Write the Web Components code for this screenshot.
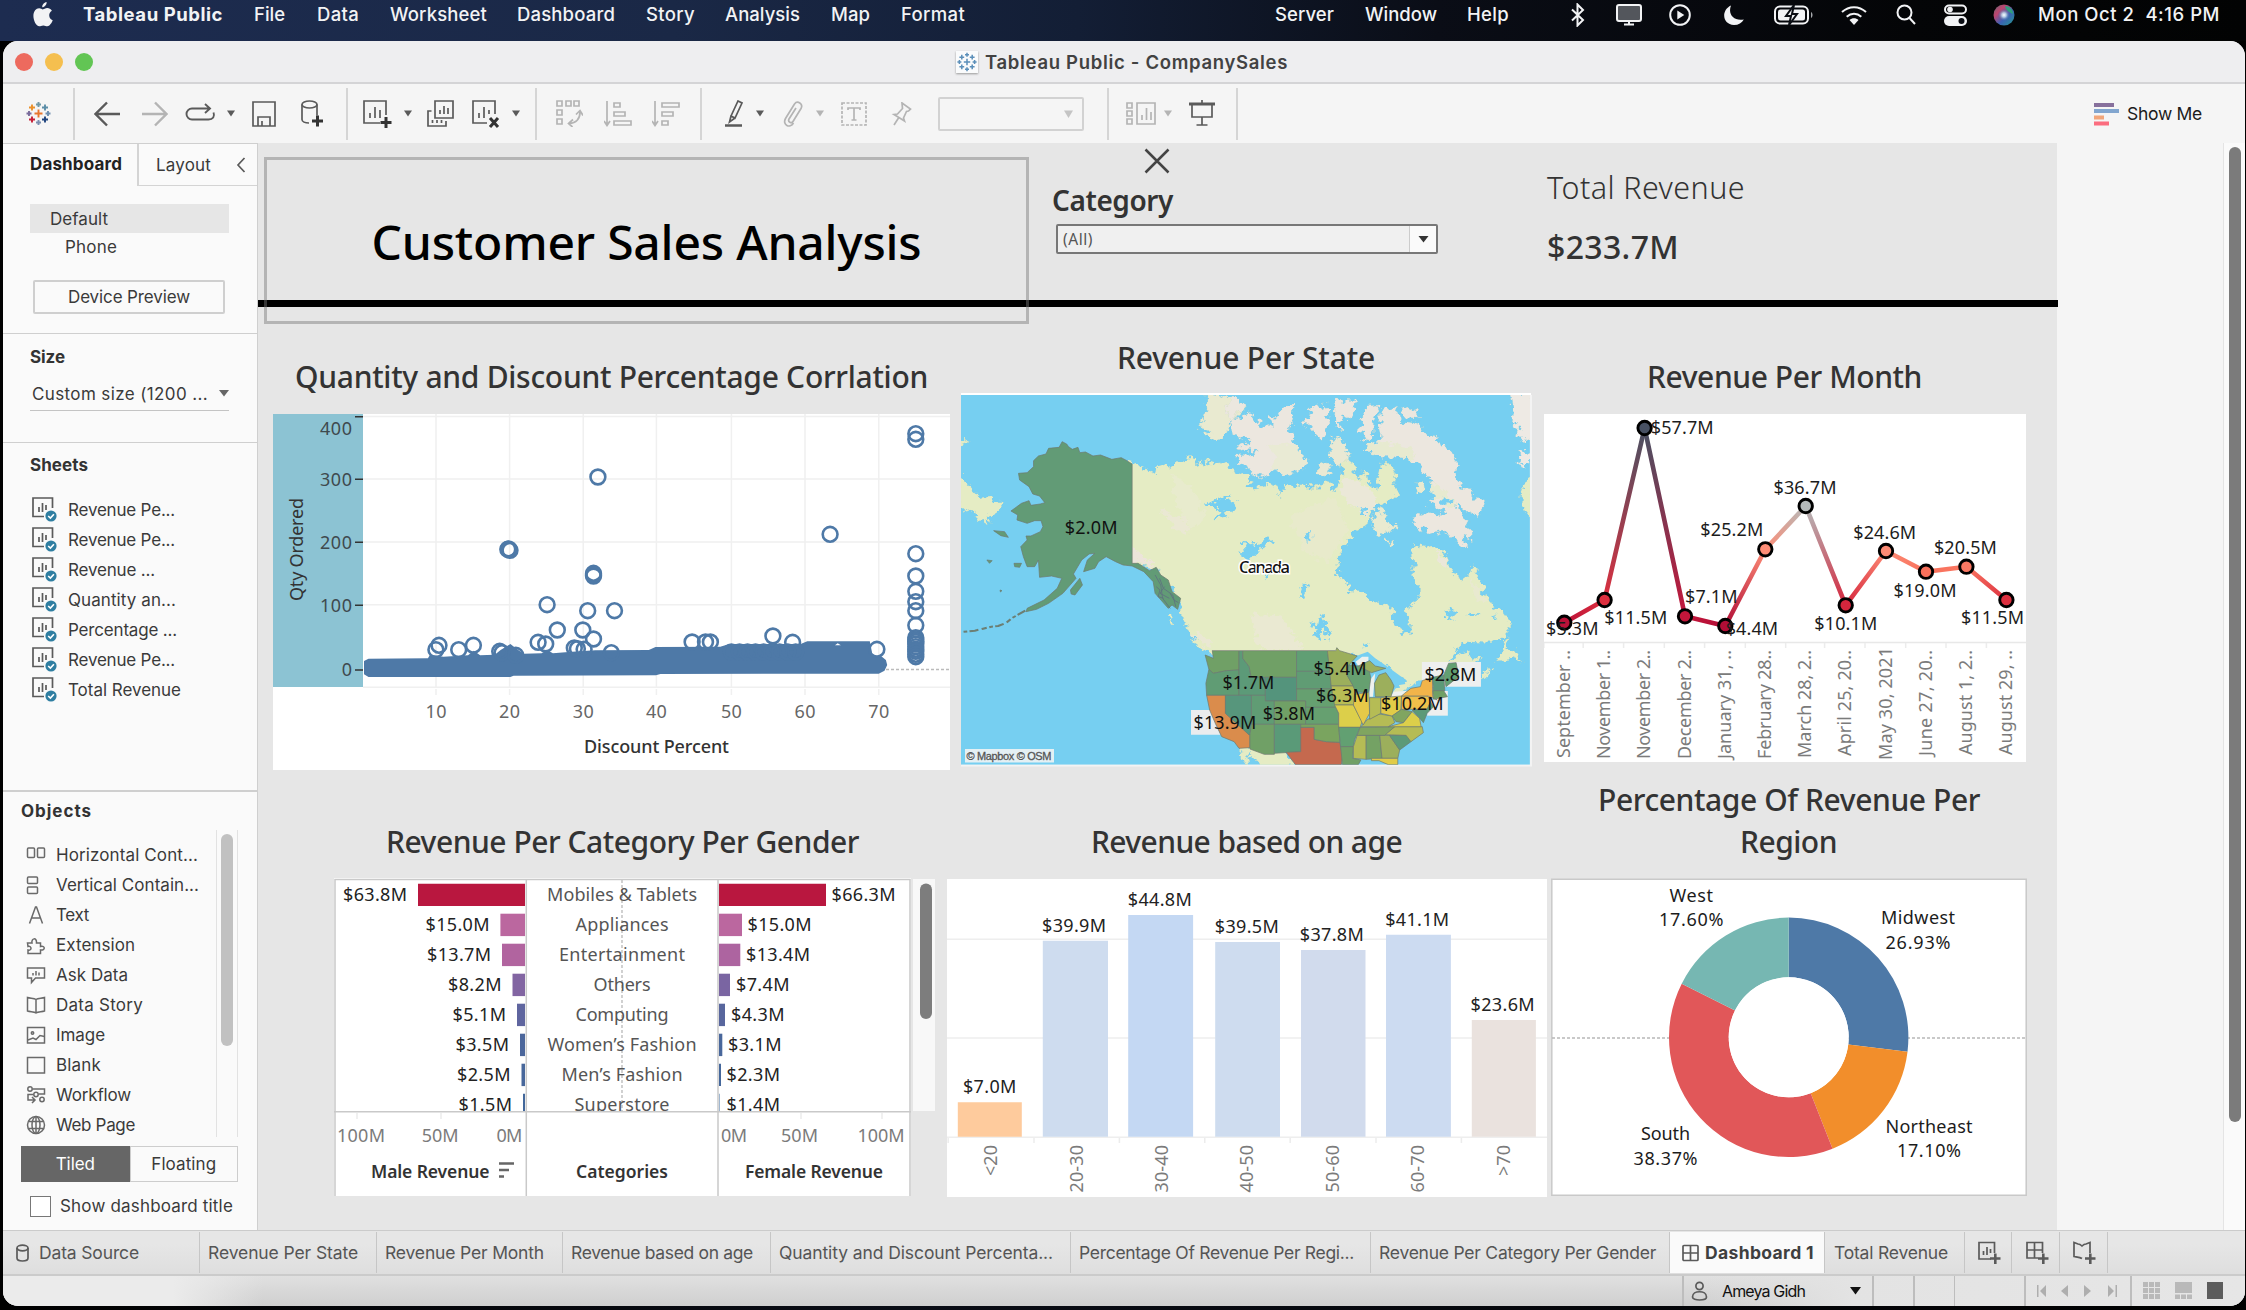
<!DOCTYPE html>
<html lang="en">
<head>
<meta charset="utf-8">
<title>Tableau Public - CompanySales</title>
<style>
html,body{margin:0;padding:0;width:2246px;height:1310px;overflow:hidden;background:#000}
body{font-family:Inter,"Liberation Sans",sans-serif}
</style>
</head>
<body>
<desktop-screen></desktop-screen>
<script>
const UI = 'Inter,"Liberation Sans",sans-serif';
const BOOK = '"Noto Sans","Open Sans",sans-serif';

function define(name, css, render) {
  customElements.define(name, class extends HTMLElement {
    connectedCallback() {
      if (this.shadowRoot) return;
      this.attachShadow({mode: 'open'}).innerHTML =
        `<style>*{box-sizing:border-box}${css}</style>${render(this)}`;
    }
  });
}

/* Text whose tracking is tuned to a given advance width. */
customElements.define('fit-text', class extends HTMLElement {
  connectedCallback() {
    if (this.shadowRoot) return;
    this.attachShadow({mode: 'open'}).innerHTML =
      '<style>:host{display:inline-block;white-space:pre;flex:none;align-self:flex-start}:host([mid]){align-self:center}</style><slot></slot>';
    const w = +this.getAttribute('w'), n = this.textContent.length;
    const natural = this.getBoundingClientRect().width;
    if (w && natural) {
      this.style.letterSpacing = ((w - natural) / n) + 'px';
      this.style.width = w + 'px';
    }
  }
});
const esc = s => s.replace(/&/g, '&amp;').replace(/</g, '&lt;');
const T = (s, w, style = '', mid = 'mid') => `<fit-text ${mid} w="${w}" style="${style}">${esc(s)}</fit-text>`;
const svg = (w, h, body, a = '') =>
  `<svg width="${w}" height="${h}" viewBox="0 0 ${w} ${h}" fill="none" stroke="#5a5a5a" stroke-width="1.7" ${a}>${body}</svg>`;

/* Lays items [start, width, html] along a row, turning starts into gaps. */
function flow(items, origin) {
  let end = origin;
  return items.map(([x, w, h]) => {
    const m = x - end; end = x + w;
    return `<span style="display:flex;flex:none;align-items:center;width:${w}px;margin-left:${m}px">${h}</span>`;
  }).join('');
}

/* ---------- macOS menu bar ---------- */
define('mac-menu-bar', `
:host{display:flex;height:41px;align-items:flex-start;background:linear-gradient(90deg,#1d2c50 0,#1a2846 30%,#131e35 48%,#0a0d16 64%,#040507 85%,#020303);color:#f2f3f5;font-size:18.5px;line-height:29px;font-weight:500;overflow:hidden}
.r{display:flex;height:29px;align-items:center}
`, () => {
  const W = 'stroke="#f2f3f5" stroke-width="2"';
  return `<div class="r">${flow([
    [33, 20, `<svg width="20" height="25" viewBox="0 0 20 25" fill="#f2f3f5"><path d="M13.6 0c.3 2.600-2 5.300-4.300 5.300C8.900 2.900 11 .6 13.600 0zM9.900 7.400c1.100 0 2.300-1.300 4.400-1.300 1.700 0 3.500 1 4.600 2.700-4 2.300-3.300 7.900.8 9.500-.8 2.300-3 6-5.400 6-1.400 0-2.100-.9-4-.9-1.900 0-2.700.9-4 .9C3.200 24.300.4 18.700.4 14c0-4.800 2.700-7.700 5.700-7.700 1.700 0 2.900 1.100 3.800 1.100z"/></svg>`],
    [83, 140, T('Tableau Public', 140, 'font-weight:700')],
    [254, 31, T('File', 31)], [317, 42, T('Data', 42)], [390, 97, T('Worksheet', 97)],
    [517, 98, T('Dashboard', 98)], [646, 49, T('Story', 49)], [725, 75, T('Analysis', 75)],
    [831, 39, T('Map', 39)], [901, 64, T('Format', 64)],
    [1275, 59, T('Server', 59)], [1365, 72, T('Window', 72)], [1467, 42, T('Help', 42)],
    [1570, 16, svg(16, 24, `<path ${W} stroke-width="1.800" d="M2 6.500 13 17l-5.500 5.500v-21L13 7 2 17.500"/>`)],
    [1616, 26, svg(26, 22, `<rect ${W} x="1" y="1" width="24" height="16" rx="2" fill="#53565c"/><path ${W} stroke-width="3" d="M13 17v3M8 20.500h10"/>`)],
    [1669, 22, svg(22, 22, `<circle ${W} cx="11" cy="11" r="9.800"/><path d="M8.300 6.500v9l7-4.500z" fill="#f2f3f5" stroke="none"/>`)],
    [1723, 22, svg(22, 22, `<path d="M8 1.500C-2 6-1 20.500 11 21c4.500 0 8-2 9.800-5.500C11 17.500 4.500 10.500 8 1.500z" fill="#f2f3f5" stroke="none"/>`)],
    [1774, 40, svg(40, 20, `<rect ${W} stroke="#a6a8ac" x="1" y="1.500" width="33" height="17" rx="5"/><rect x="4" y="4.500" width="27" height="11" rx="2.500" fill="#f2f3f5" stroke="none"/><path d="M37 7v6c2-.8 2-5.200 0-6z" fill="#a6a8ac" stroke="none"/><path d="M20 0 12 11h5l-2 9 8-11h-5z" fill="#f2f3f5" stroke="#0a0d13" stroke-width="2"/>`)],
    [1840, 28, svg(28, 22, `<path ${W} stroke-width="3.200" d="M2 8c7-6.500 17-6.500 24 0M6.700 12.700c4.300-4 10.300-4 14.600 0"/><path d="M14 21l-4.500-5c2.600-2.200 6.400-2.200 9 0z" fill="#f2f3f5" stroke="none"/>`)],
    [1896, 20, svg(20, 21, `<circle ${W} cx="8.500" cy="8.500" r="7"/><path ${W} d="m13.500 14 5.500 6"/>`)],
    [1944, 23, svg(23, 22, `<rect ${W} x="1" y="1.500" width="21" height="8" rx="4"/><circle cx="6" cy="5.500" r="2.800" fill="#f2f3f5" stroke="none"/><rect x="0" y="12" width="23" height="10" rx="5" fill="#f2f3f5" stroke="none"/><circle cx="17.500" cy="17" r="3" fill="#0a0d13" stroke="none"/>`)],
    [1993, 22, `<svg width="22" height="22"><defs><radialGradient id="a"><stop offset="0" stop-color="#fff"/><stop offset=".25" stop-color="#c6e2f2" stop-opacity=".8"/><stop offset=".7" stop-color="#2b4f9a" stop-opacity="0"/></radialGradient><linearGradient id="b" x1="0" y1="0" x2="1" y2="1"><stop offset="0" stop-color="#5b6a74"/><stop offset=".3" stop-color="#c0456f"/><stop offset=".6" stop-color="#3b62b4"/><stop offset="1" stop-color="#239a8c"/></linearGradient></defs><circle cx="11" cy="11" r="10.500" fill="url(#b)"/><path d="M12 2c5 0 8 4 8 8-3-1-7-3-8-8z" fill="#2f9e7d"/><circle cx="11" cy="11" r="9" fill="url(#a)"/></svg>`],
    [2038, 182, T('Mon Oct 2  4:16 PM', 182)]
  ], 0)}</div>`;
});

/* ---------- window title bar ---------- */
const logo = (s, c) => {
  const p = [[12.5,12.5,4,c[0]],[12.5,3.500,2.500,c[1]],[12.5,21.500,2.500,c[2]],[3,12.500,2.500,c[3]],[22,12.500,2.500,c[4]],[6,6.500,3,c[5]],[19,6.500,3,c[6]],[6,18.500,3,c[7]],[19,18.500,3,c[8]]];
  return `<svg width="${s}" height="${s}" viewBox="0 0 25 25" stroke-width="1.900">${p.map(([x,y,r,k]) => `<path stroke="${k}" d="M${x-r} ${y}h${2*r}M${x} ${y-r}v${2*r}"/>`).join('')}</svg>`;
};
define('window-title', `
:host{display:flex;flex:none;height:43px;align-items:center;background:#eeeef0;border-bottom:2px solid #d4d4d6;font-size:18.5px;font-weight:600;color:#424242}
i{display:block;width:18px;height:18px;border-radius:50%}
.ic{background:#fafbfc;box-shadow:0 1px 2px #999;width:22px;height:22px;display:flex;align-items:center;justify-content:center}
`, () => flow([
  [15, 18, '<i style="background:#ed6a5e"></i>'], [44.500, 18, '<i style="background:#f5bf4f"></i>'], [75, 18, '<i style="background:#62c554"></i>'],
  [956, 22, `<span class="ic">${logo(20, Array(9).fill('#5b8fb9'))}</span>`],
  [985, 303, T('Tableau Public - CompanySales', 303)]
], 3));

/* ---------- toolbar ---------- */
define('tool-bar', `
:host{display:flex;flex:none;height:59px;align-items:center;background:#f5f5f5;font-size:17.5px;color:#1c1c1c}
b{display:block;width:2px;height:52px;background:#d5d5d5}
.combo{width:146px;height:34px;border:2px solid #d2d2d2;border-radius:2px;display:flex;align-items:center;justify-content:flex-end;padding-right:9px}
`, () => {
  const sep = x => [x, 2, '<b></b>'];
  const tri = (x, c = '#5a5a5a') => [x, 8, svg(8, 7, `<path d="M0 .5h8L4 6.500z" fill="${c}" stroke="none"/>`)];
  const L = 'stroke="#b4b4b4"';
  return flow([
    [26, 25, logo(25, ['#e8762d','#7199a6','#7b8fb0','#7a6c9b','#6f8fb0','#eb912c','#5c8ea8','#c72037','#1f447e'])],
    sep(73),
    [94, 26, svg(26, 26, '<path stroke-width="2.400" d="M26 13H2M13 1.500 1.500 13 13 24.500"/>')],
    [142, 26, svg(26, 26, `<path ${L} stroke-width="2.400" d="M0 13h24M13 1.500 24.500 13 13 24.500"/>`)],
    [185, 31, svg(31, 22, '<path stroke-width="1.900" d="M25 5.500H7a5.500 5.500 0 0 0 0 11h16.500c4.500 0 6.500-3 5-7M20 1l5 4.500-5 4.500"/>')],
    tri(227),
    [252, 24, svg(24, 26, '<path d="M1 1h22v24H1z"/><path d="M6 25v-9h12v9M10 25v-5"/>')],
    [301, 23, svg(23, 27, '<ellipse cx="8.500" cy="4.500" rx="7.500" ry="3.500"/><path d="M1 4.500v15c0 2 3 3.500 7 3.500M16 4.500v11"/><path stroke-width="3" stroke="#333" d="M11 21h11M16.500 15.500v11"/>')],
    sep(346),
    [363, 29, svg(29, 28, '<path d="M17 23H1V1h22v14M7 18v-5M12 18V7M17 18v-8"/><path stroke-width="3" stroke="#333" d="M17.500 22.500h11M23 17v11"/>')],
    tri(404),
    [427, 28, svg(28, 28, '<path d="M8 1h18v17H8zM13 14v-4M17 14V6M21 14V8"/><path d="M4.500 11H1v15h18v-5M5.500 23v-3M10 23v-3M14.500 23v-3"/>')],
    [472, 28, svg(28, 28, '<path d="M15 23H1V1h22v13M7 18v-5M12 18V7M17 14v-4"/><path stroke-width="3" stroke="#333" d="m18 18 8 9M26 18l-8 9"/>')],
    tri(512),
    sep(535),
    [556, 27, svg(27, 27, `<g ${L}><path d="M1 1h5v5H1zM10 1h5v5h-5zM18 1h5v5h-5zM1 10h5v5H1zM1 19h5v5H1z"/><path d="M24 12c0 7-4 11-11 11.500M20 14.500l4-4 3 5M17 19.500l-4.500 4 4 3.500"/></g>`)],
    [604, 28, svg(28, 26, `<g ${L}><path d="M3 0v24M0 20l3 4.500L6 20M10 2h6v4h-6zM10 11h11v4H10zM10 20h17v4H10z"/></g>`)],
    [652, 28, svg(28, 26, `<g ${L}><path d="M3 0v24M0 20l3 4.500L6 20M10 2h17v4H10zM10 11h11v4H10zM10 20h6v4h-6z"/></g>`)],
    sep(700),
    [725, 19, svg(19, 28, '<path d="m6 16 7-15 4 2-7 15zM6 16l-1.500 6 5.500-4"/><path stroke-width="2.600" d="M0 25.500h17"/>')],
    tri(756),
    [783, 20, svg(20, 26, `<path ${L} d="M13 7 6 18c-1.500 3 2.500 5 4 2.500l8-13C20.500 3 14.500-1 11.500 3l-9 14.500C-1 24 7 28 10.500 22"/>`)],
    tri(816, '#b4b4b4'),
    [841, 26, svg(26, 24, `<path ${L} stroke-dasharray="3 1.500" d="M1 1h24v22H1z"/><path ${L} d="M7 8V6h12v2M13 6v12M10.500 18h5"/>`)],
    [891, 21, svg(21, 24, `<path ${L} d="m11 1 8.500 6-2 2-2 .5-3 6.500 1 3L3 12.500l3.500-.5 5-5.500zM7.500 16 3 23"/>`)],
    [938, 146, `<span class="combo">${svg(9, 8, '<path d="M0 .5h9L4.500 8z" fill="#c4c4c4" stroke="none"/>')}</span>`],
    sep(1107),
    [1126, 31, svg(31, 24, `<g ${L}><path d="M1 1h5v5H1zM1 9h5v5H1zM1 17h5v5H1zM11 1h18v21H11zM16 18v-5M20.500 18V6M25 18v-8"/></g>`)],
    tri(1164, '#b4b4b4'),
    [1189, 26, svg(26, 27, '<path stroke-width="3" d="M0 4h26"/><path d="M3 5v12h20V5M13 0v4M13 17v8M7.500 25h11"/>')],
    sep(1236),
    [2094, 26, `<svg width="26" height="24" stroke="none"><path fill="#87709c" d="M0 1h20v4H0z"/><path fill="#82a6cf" d="M0 7h25v4H0z"/><path fill="#f2a67a" d="M0 13.500h10v4H0z"/><path fill="#fb6d7f" d="M0 19.500h15v4H0z"/></svg>`],
    [2127, 75, T('Show Me', 75)]
  ], 3);
});

/* ---------- dashboard side pane ---------- */
define('side-pane', `
:host{display:flex;flex-direction:column;width:255px;border-right:1.5px solid #cfcfcf;border-top:1px solid #cfcfcf;background:#fafafa;font-size:17px;color:#3a3a3a;line-height:20px}
.tabs{display:flex;height:42px;flex:none}
.tabs>div{display:flex;align-items:center}
.t1{width:134px;padding-left:27px;padding-bottom:2px;font-weight:700;color:#222}
.t2{flex:1;border-left:2px solid #d4d4d4;border-bottom:1.5px solid #d4d4d4;padding-left:17px}
.t2 svg{margin-left:25px}
.row{display:flex;align-items:center;flex:none}
.sel{margin:18px 0 0 27px;width:199px;height:29px;background:#e6e6e6;padding-left:20px}
.btn{margin:20px 0 0 30px;width:192px;height:34px;border:2px solid #cfcfcf;border-radius:2px;justify-content:center}
hr{margin:0;border:0;height:1.5px;background:#cfcfcf;flex:none}
h3{margin:0;font-size:17px;line-height:20px;height:20px;flex:none;color:#333}
.size{margin:11px 0 0 27px;width:199px;height:33px;border-bottom:1.5px solid #c4c4c4;padding-left:2px;justify-content:space-between}
.s{height:30px;padding-left:29px;gap:11px}
.obj{margin-top:auto;height:440px;flex:none;display:flex;flex-direction:column}
.list{display:flex;margin-top:9px;height:307px}
.items{width:213px;padding-top:10px}
.items .row{height:30px;padding-left:23px;gap:10px}
.track{width:22px;border-left:1.5px solid #e2e2e2;border-right:1.5px solid #e2e2e2;padding:4px 0 0 4px}
.track i{display:block;width:12px;height:212px;border-radius:6px;background:#c1c1c1}
.seg{display:flex;margin:9px 0 0 18px;width:217px;height:36px;flex:none}
.seg div{flex:1;display:flex;align-items:center;justify-content:center;border:1.5px solid #cdcdcd}
.seg .on{background:#666;color:#fff;border-color:#666}
.chk{margin:14px 0 0 27px;gap:9px;height:21px}
.chk i{width:21px;height:21px;border:1.5px solid #777;background:#fff}
`, () => {
  const sheet = svg(25, 26, `<path d="M12 19.500H1V1h19.500v10M7 15v-5M10.500 15V6M14 13V8"/><circle cx="19" cy="19" r="5.600" fill="#2f7ea1" stroke="none"/><path d="m16.200 19 2.200 2 3.500-3.800" stroke="#fff" stroke-width="1.600"/>`);
  const sheets = [['Revenue Pe...',107],['Revenue Pe...',107],['Revenue ...',87],['Quantity an...',108],['Percentage ...',109],['Revenue Pe...',107],['Total Revenue',113]];
  const I = b => svg(20, 20, b, 'style="flex:none;stroke:#6a6a6a;stroke-width:1.500"');
  const objs = [
    ['Horizontal Cont...',142,'<rect x="1.500" y="3" width="7" height="9.500" rx="1"/><rect x="11.500" y="3" width="7" height="9.500" rx="1"/>'],
    ['Vertical Contain...',143,'<rect x="1.500" y="2" width="10" height="6.500" rx="1"/><rect x="1.500" y="12" width="10" height="6.500" rx="1"/>'],
    ['Text',33,'<path d="M3.500 18.500 9.500 2h1l6 16.500M5.500 13h9"/>'],
    ['Extension',79,'<path d="M1.500 8h4.500c-1-5 5-6 4.500 0h4v3.500c5-1.500 5 4.500 0 3.500v3.500H2v-3.500c4 1 4-4.500 0-3.500z"/>'],
    ['Ask Data',72,'<path d="M1.500 3h17v10H9.500l-4 4.500V13h-4zM7 10.500V8M10 10.500V6M13 10.500V7.500"/>'],
    ['Data Story',87,'<path d="M10 4.500C8 3 4 3.500 1.500 2.500v13.500c3 1 6.500.5 8.500 2 2-1.500 5.500-1 8.500-2V2.500C16 3.500 12 3 10 4.500zm0 0V18"/>'],
    ['Image',49,'<rect x="1.500" y="2.500" width="17" height="15.500"/><circle cx="6.500" cy="8" r="1.200"/><path d="m2 15 5-2 3 1.500 4-4 4.500 1"/>'],
    ['Blank',45,'<rect x="1.500" y="2.500" width="17" height="15.500"/>'],
    ['Workflow',75,'<circle cx="4" cy="4" r="2.200"/><circle cx="10" cy="9.500" r="2.200"/><circle cx="16" cy="14.500" r="2.200"/><path d="M6.500 4h12v5h-6M7.500 9.500H2v5.500h6M6 12l3 3-3 3"/>'],
    ['Web Page',79,'<circle cx="10" cy="10" r="8.500"/><ellipse cx="10" cy="10" rx="4" ry="8.500"/><path d="M2.500 6.500h15M2.500 13.500h15M10 1.500v17"/>']];
  return `
  <div class="tabs"><div class="t1">${T('Dashboard', 92)}</div><div class="t2">${T('Layout', 55)}${svg(10, 16, '<path d="M8.500 1 2 8l6.500 7"/>')}</div></div>
  <div class="row sel">${T('Default', 58)}</div>
  <div class="row" style="height:27px;padding-left:62px">${T('Phone', 52)}</div>
  <div class="row btn">${T('Device Preview', 122)}</div>
  <hr style="margin-top:18.500px">
  <h3 style="margin:12.500px 0 0 27px">${T('Size', 35)}</h3>
  <div class="row size">${T('Custom size (1200 ...', 176)}${svg(10, 7, '<path d="M0 0h10L5 6.500z" fill="#666" stroke="none"/>')}</div>
  <hr style="margin-top:31px">
  <h3 style="margin:12px 0 20px 27px">${T('Sheets', 58)}</h3>
  ${sheets.map(([t, w]) => `<div class="row s">${sheet}${T(t, w)}</div>`).join('')}
  <div class="obj"><hr>
    <h3 style="margin:9px 0 0 18px">${T('Objects', 71)}</h3>
    <div class="list"><div class="items">${objs.map(([t, w, p]) => `<div class="row">${I(p)}${T(t, w)}</div>`).join('')}</div>
      <div class="track"><i></i></div></div>
    <div class="seg"><div class="on">${T('Tiled', 39)}</div><div>${T('Floating', 65)}</div></div>
    <div class="row chk"><i></i>${T('Show dashboard title', 173)}</div>
  </div>`;
});

/* ---------- chart helpers ---------- */
const tx = (x, y, s, len, o = {}) =>
  `<text x="${x}" y="${y}" ${len ? `textLength="${len}"` : ''} ${o.a ? `text-anchor="${o.a}"` : ''} ${o.f ? `fill="${o.f}"` : ''} ${o.w ? `font-weight="${o.w}"` : ''} ${o.s ? `font-size="${o.s}"` : ''}>${esc(s)}</text>`;
const up = (x, y, s, len, f = '#7b7b7b') =>
  `<text transform="translate(${x} ${y}) rotate(-90)" text-anchor="end" textLength="${len}" fill="${f}">${esc(s)}</text>`;
const plot = (x, y, w, h, body) =>
  `<svg width="${w}" height="${h}" viewBox="${x} ${y} ${w} ${h}" font-family='${BOOK}' font-size="18" fill="#222">${body}</svg>`;
const plotCss = ':host{display:block;flex:none}svg{display:block}';

define('discount-scatter', plotCss, () => {
  const X = v => +(256 + v * .4464).toFixed(1), Y = v => +(340 + v / 3).toFixed(1);
  const P = a => a.map(([x, y]) => X(x) + ' ' + Y(y)).join('L');
  let b = '<path fill="#fff" d="M273 414h677v356H273z"/><path fill="#8cc3d3" d="M273 414h90v273h-90z"/>';
  b += '<g stroke="#f0f0f0" stroke-width="1.500">';
  [436, 509.600, 583.200, 656.400, 731.400, 805, 878.800].forEach(x => {
    b += `<path d="M${x} 414V687M${x} 689v6"/>`;
  });
  b += '<path d="M363 416.500h587M363 479h587M363 542h587M363 604.700h587M363 687.300h587"/></g>';
  b += '<path d="M886 669.500h64" stroke="#bbb" stroke-width="1.300" stroke-dasharray="3 2"/>';
  b += '<path d="M355 416.700h8M355 479.300h8M355 542.300h8M355 605.300h8M355 670h8" stroke="#333" stroke-width="1.600"/>';
  [['400',434.500],['300',486],['200',549],['100',612],['0',676]].forEach(([t, y]) => b += tx(352, y, t, t.length * 10.700, {a: 'end', f: '#3f4a4e'}));
  ['10','20','30','40','50','60','70'].forEach((t, i) => b += tx([436,509.600,583.200,656.400,731.400,805,878.800][i], 717.500, t, 21, {a: 'middle', f: '#666'}));
  b += tx(584, 753, 'Discount Percent', 145, {f: '#333', w: 500});
  b += up(303, 498, 'Qty Ordered', 103, '#333');
  b += `<path fill="#4e79a7" d="M${P([[252,956],[385,955],[390,944],[420,950],[475,946],[488,932],[502,946],[535,944],[548,930],[570,912],[585,928],[600,941],[640,940],[652,930],[665,940],[700,936],[760,931],[880,930],[895,921],[1040,920],[1060,912],[1220,912],[1235,904],[1375,904],[1381,945],[1400,948],[1411,960],[1414,975],[1408,992],[1395,1001],[906,1002],[896,1006],[577,1007],[570,1011],[252,1011],[242,1003],[242,963]])}Z"/>`;
  b += `<path fill="#fff" d="M${P([[1297,916],[1303,910],[1310,916]])}Z"/>`;
  const pts = [[1478,281],[1478,298],[1286,583],[766,411],[566,627],[569,631],[564,628],[756,700],[756,708],[756,704],[652,794],[743,812],[803,812],[675,870],[732,870],[756,897],[632,907],[649,912],[410,916],[403,929],[454,929],[487,916],[546,934],[551,938],[582,946],[713,924],[720,926],[735,928],[796,938],[977,906],[1007,906],[1018,906],[1158,888],[1202,907],[1391,928],[1478,641],[1478,708],[1478,754],[1478,785],[1478,812],[1478,856],[1478,893],[1478,899],[1478,905],[1478,912],[1478,920],[1478,928],[1478,934],[1478,943],[1478,950]];
  for (let i = 1065; i < 1220; i += 18) pts.push([i, 936]);
  b += `<g fill="none" stroke="#4e79a7" stroke-width="2.600">${pts.map(([x, y]) => `<circle cx="${X(x)}" cy="${Y(y)}" r="7.400"/>`).join('')}</g>`;
  return plot(273, 414, 677, 356, b);
});

define('state-map', plotCss, () => {
  const pg = (f, s, extra = '') => `<path fill="${f}" ${extra} d="M${s}Z"/>`;
  const land = '#e5ecc4', ice = '#ece7df', sea = '#76cff1';
  const st = [
    ['#70a066','697,962 768,962 768,1020 735,1022 700,1030 688,1018 678,975 700,985'],
    ['#609c74','688,1018 700,1030 735,1022 768,1020 768,1096 682,1096 680,1060'],
    ['#5c9a78','768,962 778,962 778,985 795,1010 800,1040 838,1042 838,1096 768,1096'],
    ['#70a066','778,962 921,962 921,1042 838,1042 800,1040 795,1010 778,985'],
    ['#54947c','838,1042 921,1042 921,1113 838,1113'],
    ['#609f74','921,962 1003,962 1010,1024 921,1024'],
    ['#609c74','921,1024 1010,1024 1013,1077 921,1077'],
    ['#66a070','921,1077 1013,1077 1030,1132 945,1132 945,1113 921,1113'],
    ['#9caf5c','1003,962 1025,962 1028,953 1035,962 1082,978 1060,1005 1055,1035 1072,1068 1013,1068'],
    ['#b8bd54','1013,1068 1072,1068 1085,1095 1072,1125 1022,1125'],
    ['#66a070','1060,1005 1085,1008 1115,1025 1118,1045 1113,1087 1078,1087 1070,1065 1055,1035'],
    ['#9caf5c','1085,1008 1115,992 1130,1008 1158,1015 1120,1028'],
    ['#9caf5c','1130,1100 1128,1060 1140,1035 1158,1028 1172,1050 1180,1068 1172,1100'],
    ['#da8c4c','682,1096 732,1096 732,1150 797,1215 797,1253 768,1255 755,1235 722,1220 705,1180 690,1140'],
    ['#57967c','732,1096 801,1096 801,1200 795,1215 732,1150'],
    ['#609c74','801,1096 838,1096 838,1113 862,1113 862,1183 801,1183'],
    ['#70a066','862,1113 945,1113 945,1183 862,1183'],
    ['#66a070','945,1132 1025,1132 1033,1150 1033,1183 945,1183'],
    ['#70a066','801,1183 862,1183 862,1273 835,1273 797,1257 797,1215'],
    ['#5a9a78','862,1183 932,1183 932,1265 862,1270'],
    ['#c5694e','932,1192 968,1192 968,1228 1000,1235 1036,1237 1043,1280 1040,1304 918,1304 893,1267 932,1265'],
    ['#7aa45f','932,1183 1033,1183 1036,1237 1000,1235 968,1228 968,1192 932,1192'],
    ['#dccf4a','1022,1125 1072,1125 1095,1175 1090,1192 1033,1192 1033,1150'],
    ['#62a072','1033,1192 1090,1192 1075,1230 1072,1250 1038,1250'],
    ['#70a066','1038,1250 1072,1250 1070,1285 1092,1290 1085,1304 1043,1304'],
    ['#b5bc55','1082,1216 1106,1216 1106,1288 1072,1285 1072,1250'],
    ['#74a264','1106,1216 1142,1216 1148,1285 1106,1288'],
    ['#9caf5c','1142,1216 1168,1216 1195,1260 1190,1285 1148,1285'],
    ['#e0cc48','1120,1285 1190,1285 1190,1304 1165,1304 1140,1292 1120,1292'],
    ['#5c9a78','1168,1216 1215,1216 1225,1235 1195,1260'],
    ['#b5bc55','1155,1214 1182,1190 1255,1190 1258,1208 1225,1235 1212,1216'],
    ['#80a560','1090,1192 1182,1190 1155,1216 1082,1216'],
    ['#b5bc55','1092,1190 1110,1168 1140,1152 1175,1158 1182,1178 1165,1190'],
    ['#e6c948','1075,1093 1113,1087 1115,1150 1098,1185 1072,1125'],
    ['#b5bc55','1115,1103 1145,1103 1145,1150 1115,1168'],
    ['#e2cb48','1145,1103 1200,1098 1198,1140 1175,1158 1145,1150'],
    ['#80a560','1175,1158 1200,1138 1228,1145 1205,1178 1185,1175'],
    ['#dccf4a','1165,1190 1205,1178 1228,1145 1248,1165 1252,1190'],
    ['#f0c04a','1200,1098 1270,1098 1277,1115 1268,1138 1200,1138'],
    ['#f2b44a','1208,1090 1225,1075 1250,1070 1255,1052 1282,1042 1283,1100 1295,1110 1270,1098 1200,1098'],
    ['#5c9a78','1282,1042 1312,1035 1315,1082 1285,1082'],
    ['#62a072','1312,1035 1325,1000 1345,998 1352,1040 1318,1070'],
    ['#70a066','1283,1082 1312,1082 1322,1100 1285,1108'],
    ['#5c9a78','1228,1140 1268,1138 1277,1115 1285,1130 1268,1150 1258,1178 1245,1160']
  ];
  let g = pg(sea, '29,195 1541,195 1541,1304 29,1304');
  /* land and inland water share one coastline roughening */
  g += '<g filter="url(#coast)"><g stroke="#b9cdbd" stroke-width=".6">';
  g += pg(land, '465,395 500,408 520,420 545,432 548,415 565,408 580,412 600,395 620,390 635,388 640,370 648,385 652,402 665,395 672,410 684,405 682,392 700,400 725,398 745,415 770,428 795,435 800,455 790,462 800,472 830,468 850,462 870,470 876,502 882,478 900,462 930,470 960,472 985,472 990,450 1010,455 1020,485 1030,470 1035,440 1045,430 1040,400 1055,385 1075,400 1078,430 1088,455 1095,420 1108,430 1112,460 1135,480 1145,400 1170,400 1185,430 1180,460 1188,490 1165,515 1145,520 1125,540 1120,570 1100,590 1070,605 1060,640 1040,660 1030,690 1032,740 1050,750 1060,780 1090,785 1115,810 1150,825 1177,830 1178,870 1190,890 1205,915 1220,910 1222,880 1212,840 1230,825 1245,800 1245,770 1228,740 1235,710 1228,670 1232,642 1260,650 1285,645 1305,665 1320,680 1325,710 1345,740 1362,750 1380,735 1387,700 1400,730 1415,765 1425,800 1445,830 1470,850 1490,880 1490,900 1470,925 1440,938 1370,935 1345,960 1322,995 1350,975 1380,962 1387,985 1410,985 1400,1000 1370,1025 1345,1030 1300,1045 1255,1050 1220,1072 1170,1103 1195,1065 1210,1050 1180,1030 1160,1010 1120,985 1080,975 1030,970 697,970 690,970 665,955 640,930 658,928 635,900 625,870 612,860 612,830 600,800 545,715 465,700');
  g += pg(land, '768,1250 797,1253 835,1270 893,1265 918,1310 822,1310 812,1278 790,1270 795,1310 785,1310');
  g += pg(land, '20,430 50,465 80,500 110,497 138,525 120,550 95,555 108,580 70,565 60,540 35,545 20,530') + pg(land, '20,322 48,337 20,352');
  g += pg(land, '1487,915 1482,960 1515,968 1508,985 1525,1000 1490,985 1455,990 1470,955') + pg(land, '1410,1028 1438,1012 1432,1030 1415,1045') + pg(land, '578,855 590,858 593,885 584,872');
  g += pg(land, '1550,430 1520,480 1518,530 1550,575');
  g += pg('#e9ead0', '680,185 755,205 785,235 750,270 735,310 700,338 690,310 665,300 680,240');
  g += pg(ice, '765,205 785,232 762,250 745,285 735,240 750,200');
  g += pg(ice, '760,260 800,250 815,270 835,292 860,285 850,262 875,262 872,250 890,228 912,228 912,262 905,290 915,340 930,370 955,395 940,420 890,435 870,420 830,440 800,430 790,410 765,400 765,378 800,375 820,360 780,362 755,355 775,345 800,340 800,328 755,315 748,285');
  g += pg('#e9ead4', '840,345 915,340 930,370 953,395 938,418 890,433 872,420 850,425 870,385', 'stroke="none"');
  g += pg(ice, '955,240 975,220 990,240 1000,215 1005,290 990,330 970,310 960,280 940,290 938,262 960,258');
  g += pg(ice, '1025,210 1082,212 1075,240 1060,270 1042,262 1035,305 1022,260');
  g += pg('#e9e9d4', '1012,330 1040,322 1048,345 1060,385 1035,405 1015,385');
  g += pg(ice, '1110,228 1142,225 1125,270 1125,320 1100,332 1090,300 1095,255');
  g += pg('#e9e9d4', '980,405 1000,395 1018,430 990,438 978,425') + pg(ice, '1200,226 1245,245 1245,265 1205,262');
  g += pg(ice, '1145,240 1185,228 1198,275 1230,278 1250,285 1265,315 1295,320 1305,345 1330,360 1340,385 1355,405 1340,430 1350,450 1360,475 1385,480 1395,505 1422,510 1415,540 1402,560 1380,545 1340,515 1355,550 1385,600 1385,630 1360,620 1370,655 1340,630 1305,600 1280,610 1232,585 1230,560 1270,550 1300,560 1312,545 1275,520 1295,490 1275,450 1250,420 1240,395 1215,385 1180,380 1130,378 1095,350 1120,342 1145,330 1140,290');
  g += pg('#e7ead0', '1098,350 1145,335 1215,350 1240,390 1180,378 1130,376', 'stroke="none"') + pg('#e7ead0', '1278,450 1300,470 1345,520 1330,540 1300,505 1285,515', 'stroke="none"');
  g += pg('#e9ead0', '1130,545 1145,535 1160,575 1192,590 1145,615 1125,600') + pg('#e9ead0', '1240,460 1258,455 1262,480 1245,485') + pg('#e9ead0','1160,630 1178,628 1168,645');
  g += pg('#eeeae4', '1487,185 1550,185 1550,338 1525,330 1505,318 1510,295 1495,285 1500,260') + pg('#eeeae4', '1510,358 1550,378 1528,410 1505,400 1518,380');
  g += '</g>';
  g += pg('#ece7dd', '1050,440 1110,470 1140,520 1110,560 1060,520 1035,480', 'opacity=".8"') + pg('#ebe7dc', '1290,660 1318,685 1320,712 1300,700', 'opacity=".9"') + pg('#ebe9d6', '800,850 880,860 940,960 820,960', 'opacity=".8"') + pg('#ece4da', '480,650 520,680 545,710 480,698') + pg('#ece7da', '560,540 620,560 640,610 600,600', 'opacity=".7"') + pg('#ece7da', '640,905 690,930 690,955 660,935', 'opacity=".7"') + pg('#ebe9d6', '590,430 640,470 680,560 640,600 600,520', 'opacity=".5"') + pg('#e9e9d0', '900,560 1020,500 1060,600 1000,700 940,660', 'opacity=".6"') + pg('#e9e9d2', '1385,740 1410,780 1420,820 1395,810', 'opacity=".8"');
  g += pg(sea, '672,525 700,515 715,500 740,498 735,512 762,510 750,545 728,545 735,560 700,565 715,535 700,525') + pg(sea, '770,675 785,655 778,630 810,645 840,625 862,632 830,655 810,680 780,685') + pg(sea, '943,612 960,606 960,628 948,632') + pg(sea, '935,768 948,757 945,790 930,800') + pg(sea, '955,872 975,885 980,857 997,865 1012,920 1008,935 990,895 982,900 990,938 975,920') + pg(sea, '1097,940 1108,935 1112,950 1100,955') + pg(sea, '1320,840 1335,835 1342,850 1330,860 1345,872 1325,865') + pg(sea, '1375,855 1388,842 1402,855 1385,862') + pg(sea, '1440,862 1455,855 1448,868') + pg(sea, '1085,535 1100,535 1110,552 1100,552') + pg(sea, '1310,500 1330,510 1320,528 1308,520') + pg(sea,'838,738 850,735 842,748');
  g += '</g>';
  /* Great Lakes */
  g += pg(sea, '1080,978 1110,965 1130,985 1160,1008 1205,1045 1210,1062 1195,1065 1178,1072 1168,1040 1140,1035 1126,1060 1125,1100 1114,1098 1116,1030 1075,1008') + pg('#eef1ee', '1078,995 1095,980 1112,980 1112,992 1085,1008') + pg('#eef1ee', '1116,1050 1130,1030 1124,1100 1114,1100') + pg('#eef1ee', '1168,1100 1180,1085 1215,1082 1208,1096 1175,1104') + pg(sea, '1218,1072 1252,1060 1250,1070 1222,1076');
  g += pg('#ebecee', '640,1140 800,1140 800,1214 640,1214', 'clip-path="url(#sea1)"') + pg('#eeefef', '1254,996 1411,996 1411,1070 1254,1070') + pg('#eeefef', '1268,1083 1323,1083 1323,1157 1268,1157');
  g += '<g stroke="#6f7a70" stroke-width="2" stroke-linejoin="round">';
  st.forEach(([f, s]) => g += pg(f, s));
  const ak = '#629b76';
  g += pg(ak, '484,402 470,392 455,383 430,388 400,375 380,378 360,366 345,368 340,352 325,358 315,350 310,342 298,335 290,352 262,355 255,372 235,378 222,392 222,410 205,428 182,430 185,450 210,470 220,492 238,498 252,518 240,522 215,526 210,512 190,520 162,543 180,555 178,570 205,580 225,572 242,572 247,590 240,605 215,618 202,618 205,630 188,650 195,680 205,710 225,710 235,690 238,742 270,738 297,745 285,775 250,810 205,835 202,845 230,838 262,820 300,790 335,745 328,732 350,690 370,672 385,670 365,690 355,725 385,715 395,695 415,680 440,695 460,705 484,708 515,725 540,755 545,790 580,835 590,825 605,838 613,805 590,785 580,750 560,735 548,712 530,722 500,700 484,700');
  g += pg(ak, '320,780 345,745 352,765 332,795 322,792') + pg(ak, '116,602 145,605 155,622 135,617') + pg(ak, '170,700 190,700 185,712 172,710') + pg(ak, '98,690 112,692 105,700') + pg(ak, '133,780 138,782 134,786');
  g += '<path d="m545 735 15 30 5 40 20 30M557 745l10 30 25 20 8 35M570 770l-12 20 25 15M548 770l10 10-5 20 15 5M585 790l10 20 12 8" fill="none" stroke="#5f7380" stroke-width="2.500"/>';
  g += '<path d="M200 842l-35 22-15 14-22 10-18 2-22 6-22 6-34 4" fill="none" stroke="#6c7f74" stroke-width="6" stroke-dasharray="24 6 10 7 14 9"/>';
  g += '</g>';
  g += '<path d="M697 961.500h330" stroke="#98a08c" stroke-width="3"/>';
  const X = v => +(950 + v * .3763).toFixed(1), Y = v => +(330 + v / 3).toFixed(1);
  let b = '<path fill="#fff" d="M961 393h570v2h-570z"/><path fill="#f3f3f3" d="M961 395h571v371.500H961z"/>';
  b += `<defs><clipPath id="sea1"><path d="M640 1140h65v40l17 40 20 10h-102z"/></clipPath><filter id="coast" filterUnits="userSpaceOnUse" x="0" y="170" width="1570" height="1160" color-interpolation-filters="sRGB"><feTurbulence type="fractalNoise" baseFrequency=".055" numOctaves="3" seed="7"/><feDisplacementMap in="SourceGraphic" scale="34" xChannelSelector="R" yChannelSelector="G"/></filter></defs><svg x="961" y="395" width="569" height="369.700" viewBox="961 395 569 369.700"><g transform="translate(950 330) scale(.3763 .33333)">${g}</g></svg>`;
  [['$2.0M',305,612,140],['$5.4M',966,1034,141],['$1.7M',724,1078,138],['$6.3M',973,1116,140],['$10.2M',1145,1139,167],['$3.8M',831,1170,139],['$13.9M',647,1197,167],['$2.8M',1261,1052,138]]
    .forEach(([t, x, y, w]) => b += tx(X(x), Y(y), t, (w * .3763).toFixed(1), {f: '#111'}));
  b += `<text x="${X(768)}" y="${Y(730)}" textLength="51" font-size="16.500" font-weight="500" stroke="#fff" stroke-width="3" paint-order="stroke" fill="#111">Canada</text>`;
  b += `<path fill="#eef3f4" opacity=".92" d="M965 749h89v13.500h-89z"/><text x="966.500" y="760" font-family="Liberation Sans,Arial,sans-serif" font-size="11" fill="#555" stroke="#555" stroke-width=".3" textLength="85">© Mapbox © OSM</text>`;
  return plot(961, 393, 571, 374, b);
});

define('month-line', plotCss, () => {
  const X = v => +(1530 + v * .3571).toFixed(1), Y = v => +(340 + v / 3).toFixed(1);
  const p = [[96,848,'#bb1238'],[209,780,'#dc2f3f'],[321,264,'#485163'],[434,829,'#c4163a'],[547,858,'#b10d36'],[659,628,'#fd8d77'],[772,498,'#b5baba'],[884,796,'#d5263d'],[997,633,'#fd8b75'],[1109,695,'#f8705b'],[1222,680,'#fa7863'],[1334,780,'#dc2f3f']];
  let b = '<path fill="#fff" d="M1544 414h482v348h-482z"/><path d="M1544 642.500h482" stroke="#e8e8e8" stroke-width="1.500"/><g stroke="#ececec" stroke-width="1.500">';
  [39,149,262,376,489,603,716,825,938,1052,1165,1278].forEach(x => b += `<path d="M${X(x)} 643v5"/>`);
  b += '</g><defs>';
  for (let i = 0; i < 11; i++) b += `<linearGradient id="l${i}" gradientUnits="userSpaceOnUse" x1="${X(p[i][0])}" y1="${Y(p[i][1])}" x2="${X(p[i+1][0])}" y2="${Y(p[i+1][1])}"><stop stop-color="${p[i][2]}"/><stop offset="1" stop-color="${p[i+1][2]}"/></linearGradient>`;
  b += '</defs>';
  for (let i = 0; i < 11; i++) b += `<path stroke="url(#l${i})" stroke-width="4.600" stroke-linecap="round" d="M${X(p[i][0])} ${Y(p[i][1])}L${X(p[i+1][0])} ${Y(p[i+1][1])}"/>`;
  p.forEach(([x, y, c]) => b += `<circle cx="${X(x)}" cy="${Y(y)}" r="6.700" fill="${c}" stroke="#000" stroke-width="2.900"/>`);
  [['$5.3M',45,884],['$11.5M',208,852],['$57.7M',338,282],['$7.1M',434,790],['$4.4M',548,884],['$25.2M',477,587],['$36.7M',682,461],['$10.1M',796,871],['$24.6M',905,597],['$19.0M',1018,771],['$20.5M',1131,641],['$11.5M',1207,853]]
    .forEach(([t, x, y]) => b += tx(X(x), Y(y), t, t.length === 6 ? 63 : 52.500, {f: '#1c1c1c'}));
  [['September ..',108,650],['November 1..',109,650],['November 2..',109,650],['December 2..',109,650],['January 31, ..',109,650],['February 28..',109,650],['March 28, 2..',108,650],['April 25, 20..',106,650],['May 30, 2021',113,647],['June 27, 20..',106,650],['August 1, 2..',105,650],['August 29, ..',105,650]]
    .forEach(([t, l, y], i) => b += up(X(p[i][0]) + 5.500, y, t, l));
  return plot(1544, 414, 482, 348, b);
});

define('gender-bars', plotCss, () => {
  const c = ['#b9173f','#bb679f','#b1649f','#8265a2','#5f659f','#4b669b','#47679b','#42679b'];
  const d = ['#b9173f','#bb679f','#ad64a0','#7a65a2','#58669d','#49679b','#45679b','#9fb6cf'];
  const ms = [418,500.400,502,512.500,517,520,521.500,523], me = [407,489.500,491,501.500,506,509,510.500,512];
  const fe = [826,742,740.300,730,725,722.300,721,720], fs = [831.500,747.500,746,736,731,728,726.500,726.500];
  const mt = ['$63.8M','$15.0M','$13.7M','$8.2M','$5.1M','$3.5M','$2.5M','$1.5M'], ft = ['$66.3M','$15.0M','$13.4M','$7.4M','$4.3M','$3.1M','$2.3M','$1.4M'];
  const n = [['Mobiles & Tablets',150],['Appliances',93],['Entertainment',126],['Others',57],['Computing',93],['Women’s Fashion',149],['Men’s Fashion',121],['Superstore',95]];
  let b = '<path fill="#fff" d="M334 878h577v318H334z"/><path d="M622 880v231" stroke="#b8b8b8" stroke-width="1.300" stroke-dasharray="3 2"/>';
  b += '<svg x="334" y="878" width="577" height="233" viewBox="334 878 577 233">';
  for (let i = 0; i < 8; i++) {
    const y = 883.700 + i * 30;
    b += `<path fill="${c[i]}" d="M${ms[i]} ${y}H525v22.400H${ms[i]}z"/><path fill="${d[i]}" d="M719 ${y}H${fe[i]}v22.400H719z"/>`;
    b += tx(me[i], y + 17.600, mt[i], i < 3 ? 64 : 53.500, {a: 'end'}) + tx(fs[i], y + 17.600, ft[i], i < 3 ? 64 : 53.500);
    b += tx(622, y + 17.300, n[i][0], n[i][1], {a: 'middle', f: '#555'});
  }
  b += '</svg><path d="M335 1196V879.500h575V1196M526.300 879v317M718 879v317M334 1111.700h577" fill="none" stroke="#c9c9c9" stroke-width="1.500"/><path d="M357 1113v6M441 1113v6M801 1113v6M882 1113v6" stroke="#ececec" stroke-width="1.500"/>';
  [['100M',337,48],['50M',421.700,37],['0M',496.400,26],['0M',721,26],['50M',781,37],['100M',857.500,47]].forEach(([t, x, w]) => b += tx(x, 1141.500, t, w, {f: '#7b7b7b'}));
  [['Male Revenue',371,118.500],['Categories',576,92],['Female Revenue',745,138]].forEach(([t, x, w]) => b += tx(x, 1177.700, t, w, {f: '#333', w: 600, s: 17.500}));
  b += '<path d="M499 1163.500h15M499 1170h10M499 1176.500h5" stroke="#666" stroke-width="2.500"/>';
  b += '<path fill="#f8f8f8" d="M913 879h22v232h-22z"/><rect x="920" y="883.500" width="12" height="135.500" rx="6" fill="#7d7d7d"/>';
  return plot(334, 878, 602, 318, b);
});

define('age-bars', plotCss, () => {
  const X = v => +(940 + v * .3954).toFixed(1), Y = v => +(770 + v / 3).toFixed(1);
  let b = '<path fill="#fff" d="M947 879h600v318H947z"/><path d="M947 939.300h600M947 1038h600M947 1137.300h600" stroke="#eee" stroke-width="1.500"/>';
  [[45,207,997,'#fecb9d','$7.0M',58,970,128,'<20',31],[260,425,512,'#cedcef','$39.9M',258,486,344,'20-30',47.500],[476,640,435,'#c4d8f3','$44.8M',475,408,560,'30-40',47.500],[696,860,516,'#cedcef','$39.5M',695,489,775,'40-50',47.500],[913,1076,540,'#d1dbed','$37.8M',910,513,992,'50-60',47.500],[1128,1292,494,'#ccdbf1','$41.1M',1126,467,1208,'60-70',47.500],[1345,1507,750,'#eae2de','$23.6M',1342,723,1424,'>70',31]]
    .forEach(([x0, x1, y, c, t, lx, ly, ax, a, al]) => {
      b += `<path fill="${c}" d="M${X(x0)} ${Y(y)}H${X(x1)}V1136.700H${X(x0)}z"/>`;
      b += tx(X(lx), Y(ly), t, t.length === 6 ? 64 : 53.500) + up(X(ax) + 6.500, 1145, a, al);
    });
  [19,236,452,668,884,1101,1317].forEach(x => b += `<path stroke="#ececec" stroke-width="1.500" d="M${X(x) + .7} 1138v5"/>`);
  return plot(947, 879, 600, 318, b);
});

define('region-donut', plotCss, () => {
  const cx = 1788.700, cy = 1037.300, R = 119.700, r = 60;
  const pt = (q, a) => { const t = a * 2 * Math.PI; return (cx + q * Math.sin(t)).toFixed(2) + ' ' + (cy - q * Math.cos(t)).toFixed(2); };
  let b = '<path fill="#fff" stroke="#c9c9c9" stroke-width="1.500" d="M1551.800 879.300h474.400V1195.300h-474.400z"/><path d="M1552 1038h474" stroke="#b8b8b8" stroke-width="1.300" stroke-dasharray="3 2"/>';
  let a = 0;
  [[.2693,'#4e79a7'],[.1710,'#f28e2b'],[.3837,'#e15759'],[.1760,'#76b7b2']].forEach(([f, c]) => {
    const e = a + f;
    b += `<path fill="${c}" d="M${pt(R, a)}A${R} ${R} 0 0 1 ${pt(R, e)}L${pt(r, e)}A${r} ${r} 0 0 0 ${pt(r, a)}z"/>`;
    a = e;
  });
  b += `<circle cx="${cx}" cy="${cy}" r="${r}" fill="#fff"/>`;
  [['West',1669.500,901.700,43.500],['17.60%',1659,926.300,64.500],['Midwest',1881,924,74],['26.93%',1885.500,949,65],['Northeast',1885.500,1132.700,87],['17.10%',1897,1157.300,64],['South',1641,1140,49],['38.37%',1633.500,1165,64]]
    .forEach(([t, x, y, w]) => b += tx(x, y, t, w, {f: '#1c1c1c'}));
  return plot(1551, 878, 476, 319, b);
});

/* A titled dashboard zone: heading above a slotted plot. */
define('chart-zone', `
:host{display:flex;flex-direction:column;flex:none}
h2{margin:0;font:500 30px/42px ${BOOK};color:#333;display:flex;flex-direction:column;align-items:flex-start;flex:none}
`, el => {
  const lines = JSON.parse(el.getAttribute('lines'));
  return `<h2 style="margin-top:${el.getAttribute('top')}px;margin-bottom:${el.getAttribute('gap')}px">${lines.map(([t, x, w]) => T(t, w, `margin-left:${x}px`, '')).join('')}</h2><slot></slot>`;
});
const zone = (left, top, gap, lines, tag) =>
  `<chart-zone style="margin-left:${left}px" top="${top}" gap="${gap}" lines='${JSON.stringify(lines)}'><${tag}></${tag}></chart-zone>`;

/* ---------- dashboard header ---------- */
define('dash-header', `
:host{display:flex;height:164px;border-bottom:7px solid #000;font-family:${BOOK};flex:none;width:1800px;position:relative}
.frame{margin:13.5px 0 0 6px;width:765px;height:167px;border:3px solid rgba(120,120,120,.45);display:flex;justify-content:center;padding-top:49.5px;flex:none;font-size:48px;line-height:66px;font-weight:500;color:#000}
.cat{margin-left:23px;width:386px;padding-top:5px;display:flex;flex-direction:column;align-items:flex-start}
.cat>svg{margin-left:92px;flex:none}
.cat h4{margin:7px 0 0;font-size:28px;line-height:38px;font-weight:600;color:#333}
.dd{margin:5px 0 0 4px;width:382px;height:30px;border:2px solid #777;border-radius:2px;background:#f0f0f0;display:flex;align-items:center;font-size:15.5px;color:#555;padding-left:5px;flex:none}
.dd span{margin-left:auto;height:26px;width:27px;border-left:1px solid #ccc;background:#fafafa;display:flex;align-items:center;justify-content:center}
.tot{margin-left:109px;padding-top:24px;color:#333;display:flex;flex-direction:column;align-items:flex-start}
`, () => `
<div class="frame">${T('Customer Sales Analysis', 550, '', '')}</div>
<div class="cat">${svg(26, 26, '<path stroke="#444" stroke-width="2.500" d="m1.500 1.500 23 23M24.500 1.500l-23 23"/>')}
<h4>${T('Category', 121)}</h4>
<div class="dd">${T('(All)', 30)}<span>${svg(11, 7, '<path d="M.5 0h10l-5 6.500z" fill="#333" stroke="none"/>')}</span></div></div>
<div class="tot">${T('Total Revenue', 198, 'font-size:30.500px;line-height:40px;font-weight:300', '')}${T('$233.7M', 132, 'font-size:32px;line-height:40px;margin-top:20px;font-weight:500', '')}</div>`);

define('dash-canvas', `
:host{display:flex;flex-direction:column;width:1799px;height:1087px;background:#e6e6e6;flex:none}
.row{display:flex;align-items:flex-start}
.r1{height:468px}
`, () => `<dash-header></dash-header>
<div class="row r1">
${zone(15, 49, 16, [['Quantity and Discount Percentage Corrlation', 22, 633]], 'discount-scatter')}
${zone(11, 30, 14, [['Revenue Per State', 156, 258]], 'state-map')}
${zone(12, 49, 16, [['Revenue Per Month', 103, 275]], 'month-line')}
</div>
<div class="row">
${zone(76, 46, 15, [['Revenue Per Category Per Gender', 52, 473]], 'gender-bars')}
${zone(11, 46, 16, [['Revenue based on age', 144, 311]], 'age-bars')}
${zone(4, 4, 15, [['Percentage Of Revenue Per', 47, 382], ['Region', 189, 97]], 'region-donut')}
</div>`);

/* ---------- sheet tabs ---------- */
define('sheet-tabs', `
:host{display:flex;height:46px;background:linear-gradient(#e6e6e6 30%,#dedede);border-top:1.5px solid #cbcbcb;border-bottom:2px solid #cbcbcb;font-size:17.5px;color:#555;flex:none}
div{display:flex;align-items:center;border-right:1.5px solid #c6c6c6;flex:none;margin:1px 0}
.on{background:#fafafa;color:#3f3f3f;font-weight:700}
`, () => {
  const tabs = [
    [3,199.500,16,`${svg(13,18,'<ellipse cx="6.500" cy="4" rx="5.500" ry="2.800"/><path d="M1 4v10c0 4 11 4 11 0V4"/>')}<span style="width:10px"></span>${T('Data Source',100)}`],
    [199.500,377,208,T('Revenue Per State',150)],[377,563,385,T('Revenue Per Month',159)],[563,771,571,T('Revenue based on age',182)],
    [771,1071,779,T('Quantity and Discount Percenta...',274)],[1071,1370.500,1079,T('Percentage Of Revenue Per Regi...',275)],[1370.500,1670,1379,T('Revenue Per Category Per Gender',277)],
    [1670,1825,1682,`${svg(17,18,'<rect x="1" y="1.500" width="15" height="15" rx="1"/><path d="M8.500 1.500v15M1 9h15"/>')}<span style="width:6px"></span>${T('Dashboard 1',109)}`,'on'],
    [1825,1964.500,1834,T('Total Revenue',114)],
    [1964.500,2012,1978,svg(24,24,'<path d="M13 18H1V1.500h15.500V12M5.500 14v-4M9 14V6M12.500 12V8"/><path stroke-width="2.600" d="M12 17.500h10.500M17.300 12.500v10.500"/>')],
    [2012,2059.500,2026,svg(24,24,'<path d="M12 17H1V1.500h15.500V12M8.500 1.500V17M1 9h15.500"/><path stroke-width="2.600" d="M12 17.500h10.500M17.300 12.500v10.500"/>')],
    [2059.500,2108,2073,svg(24,24,'<path d="M9 17.500c-2-1.500-5-1.500-8-2V1.500l4 1.500c2 0 3 1 4 2 1-1 2-2 4-2l4-1.500V12"/><path stroke-width="2.600" d="M12 17.500h10.500M17.300 12.500v10.500"/>')]
  ];
  return tabs.map(([a, z, s, h, c]) => `<div class="${c || ''}" style="width:${z - a}px;padding-left:${s - a}px">${h}</div>`).join('');
});

/* ---------- status bar ---------- */
define('status-bar', `
:host{display:flex;flex:none;height:30px;background:linear-gradient(90deg,#ebebeb 0,#ebebeb 170px,transparent 260px,transparent 1700px,#e3e3e3 1850px,#e6e6e6),linear-gradient(#e0e0e0,#cfcfcf);font-size:16px;color:#111;align-items:center}
b{display:block;width:1.500px;height:30px;background:#bdbdbd}
`, () => {
  const sep = x => [x, 1.500, '<b></b>'];
  const q = (w, p) => svg(w, 14, `<path fill="#aeaeae" stroke="none" d="${p}"/>`);
  return flow([
    sep(1682),
    [1691, 17, svg(17, 21, '<circle cx="8.500" cy="5" r="3.600"/><path d="M1.500 16c0-7 14-7 14 0 0 4-14 4-14 0z"/>')],
    [1722, 83, T('Ameya Gidh', 83)],
    [1850, 11, svg(11, 8, '<path d="M0 0h11L5.500 7.500z" fill="#111" stroke="none"/>')],
    sep(1872), sep(1913), sep(1953.500), sep(2024),
    [2037, 9, q(9, 'M0 1h1.500v12H0zM9 1v12L3 7z')], [2061, 7, q(7, 'M7 1v12L0 7z')], [2084, 7, q(7, 'M0 1v12l7-6z')], [2108, 9, q(9, 'M7.500 1H9v12H7.500zM0 1v12l6-6z')],
    sep(2130),
    [2143, 18, svg(18, 18, '<path fill="#b9b9b9" stroke="none" d="M0 0h5v5H0zM6 0h5v5H6zM12 0h5v5h-5zM0 6h5v5H0zM6 6h5v5H6zM12 6h5v5h-5zM0 12h5v5H0zM6 12h5v5H6zM12 12h5v5h-5z"/>')],
    [2175, 18, svg(18, 18, '<path fill="#b9b9b9" stroke="none" d="M0 0h17v11H0zM0 12.500h5v4.500H0zM6 12.500h5v4.500H6zM12 12.500h5v4.500h-5z"/>')],
    [2207, 16, svg(16, 18, '<path fill="#5c5c5c" stroke="none" d="M0 0h16v17H0z"/>')]
  ], 3);
});

define('tableau-window', `
:host{display:flex;flex-direction:column;width:2242px;height:1265px;margin-left:3px;border-radius:15px;overflow:hidden;background:#f5f5f5;flex:none}
.main{display:flex;height:1087px;flex:none}
.rest{flex:1}
.track{width:22px;border-left:1px solid #e4e4e4;background:#fafafa;padding:4px 0 0 5px}
.track i{display:block;width:12px;height:975px;border-radius:6px;background:#7b7b7b}
`, () => `<window-title></window-title><tool-bar></tool-bar>
<div class="main"><side-pane></side-pane><dash-canvas></dash-canvas><div class="rest"></div><div class="track"><i></i></div></div>
<sheet-tabs></sheet-tabs><status-bar></status-bar>`);

define('desktop-screen', `
:host{display:block;width:2246px;height:1310px;background:linear-gradient(90deg,#000,#0a0d16 40%,#000);font-family:${UI};overflow:hidden}
`, () => '<mac-menu-bar></mac-menu-bar><tableau-window></tableau-window>');
</script>
</body>
</html>
